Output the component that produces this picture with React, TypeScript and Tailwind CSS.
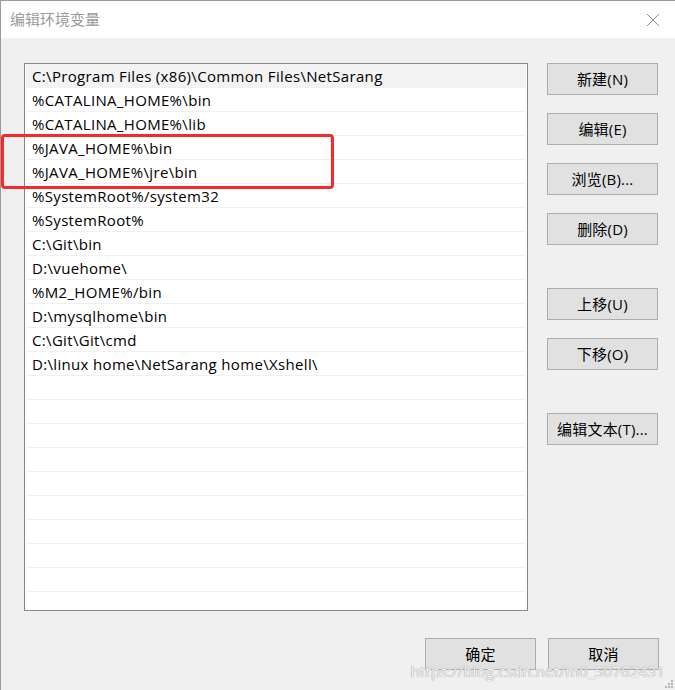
const paths = [
  "C:\\Program Files (x86)\\Common Files\\NetSarang",
  "%CATALINA_HOME%\\bin",
  "%CATALINA_HOME%\\lib",
  "%JAVA_HOME%\\bin",
  "%JAVA_HOME%\\jre\\bin",
  "%SystemRoot%/system32",
  "%SystemRoot%",
  "C:\\Git\\bin",
  "D:\\vuehome\\",
  "%M2_HOME%/bin",
  "D:\\mysqlhome\\bin",
  "C:\\Git\\Git\\cmd",
  "D:\\linux home\\NetSarang home\\Xshell\\",
];

const rows = [...paths, ...Array(10).fill("")];

const font = { fontFamily: '"Open Sans", "Noto Sans CJK SC", sans-serif' };

const Btn = ({ label, className = "" }: { label: string; className?: string }) => (
  <button
    className={`w-[111px] h-[32px] bg-[#e1e1e1] border border-[#adadad] text-[15px] tracking-[0.2px] text-black flex items-center justify-center ${className}`}
  >
    {label}
  </button>
);

export default function App() {
  return (
    <div
      className="relative w-[675px] h-[690px] flex flex-col border-t border-l border-[#9a9a9a] overflow-hidden"
      style={font}
    >
      {/* title bar */}
      <div className="h-[37px] bg-white flex items-center justify-between pl-[9px] pr-[14px] shrink-0">
        <span className="text-[15px] text-[#9a9a9a]">编辑环境变量</span>
        <svg width="14" height="14" viewBox="0 0 14 14" className="mr-[1px]">
          <path d="M1 1 L13 13 M13 1 L1 13" stroke="#8a8a8a" strokeWidth="1" />
        </svg>
      </div>

      <div className="flex-1 bg-[#f0f0f0] flex flex-col pl-[23px] pt-[25px]">
        <div className="flex">
          {/* list */}
          <div className="w-[504px] h-[548px] bg-white border border-[#828790] pl-[1px] pr-[1px] overflow-hidden">
            {rows.map((p, i) => (
              <div
                key={i}
                className={`h-[24px] box-border border-b border-[#f0f0f0] text-[15px] tracking-[0.33px] leading-[23px] pt-[1px] text-black pl-[6px] whitespace-nowrap ${
                  i === 0 ? "bg-[#f3f3f3]" : ""
                }`}
              >
                {p}
              </div>
            ))}
          </div>

          {/* side buttons */}
          <div className="ml-[19px] flex flex-col">
            <Btn label="新建(N)" />
            <Btn label="编辑(E)" className="mt-[18px]" />
            <Btn label="浏览(B)..." className="mt-[18px]" />
            <Btn label="删除(D)" className="mt-[18px]" />
            <Btn label="上移(U)" className="mt-[43px]" />
            <Btn label="下移(O)" className="mt-[18px]" />
            <Btn label="编辑文本(T)..." className="mt-[43px]" />
          </div>
        </div>

        {/* bottom buttons */}
        <div className="flex justify-end gap-[12px] pr-[16px] mt-[27px]">
          <Btn label="确定" />
          <Btn label="取消" />
        </div>
      </div>

      {/* red annotation box */}
      <div className="absolute left-[0px] top-[133px] w-[333px] h-[55px] border-[3px] border-[#f52a2a] rounded-[4px]" />

      {/* watermark */}
      <div
        className="absolute right-[10px] bottom-[8px] text-[15px] text-[#f4f4f4] tracking-[0.2px]"
        style={{ textShadow: "0 0 1px #9a9a9a, 0 0 1px #9a9a9a" }}
      >
        https://blog.csdn.net/m0_50762431
      </div>

      {/* resize grip */}
      <svg className="absolute right-[1px] bottom-[1px]" width="10" height="10" viewBox="0 0 10 10">
        {[
          [7, 1],
          [7, 4],
          [4, 4],
          [7, 7],
          [4, 7],
          [1, 7],
        ].map(([x, y], i) => (
          <rect key={i} x={x} y={y} width="2" height="2" fill="#b5b5b5" />
        ))}
      </svg>
    </div>
  );
}
